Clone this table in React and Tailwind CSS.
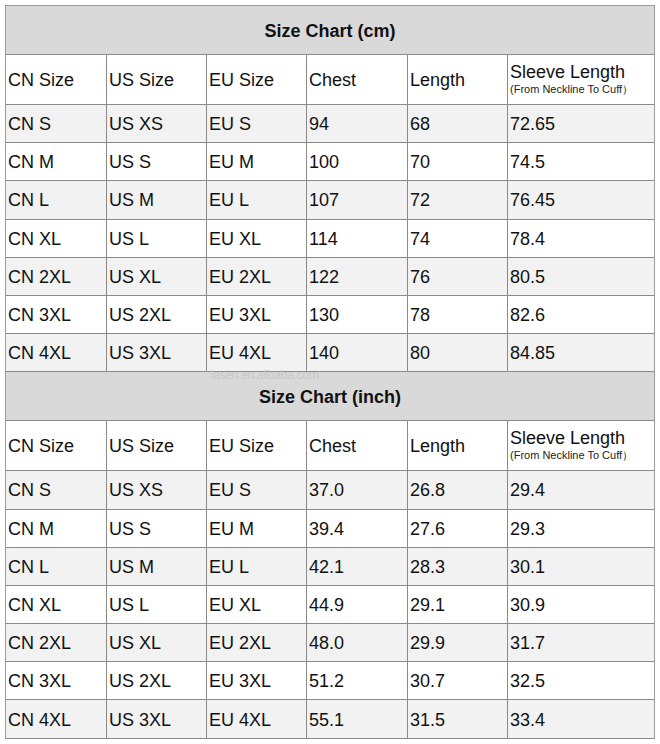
import React from "react";

const cm = [
  ["CN S", "US XS", "EU S", "94", "68", "72.65"],
  ["CN M", "US S", "EU M", "100", "70", "74.5"],
  ["CN L", "US M", "EU L", "107", "72", "76.45"],
  ["CN XL", "US L", "EU XL", "114", "74", "78.4"],
  ["CN 2XL", "US XL", "EU 2XL", "122", "76", "80.5"],
  ["CN 3XL", "US 2XL", "EU 3XL", "130", "78", "82.6"],
  ["CN 4XL", "US 3XL", "EU 4XL", "140", "80", "84.85"],
];

const inch = [
  ["CN S", "US XS", "EU S", "37.0", "26.8", "29.4"],
  ["CN M", "US S", "EU M", "39.4", "27.6", "29.3"],
  ["CN L", "US M", "EU L", "42.1", "28.3", "30.1"],
  ["CN XL", "US L", "EU XL", "44.9", "29.1", "30.9"],
  ["CN 2XL", "US XL", "EU 2XL", "48.0", "29.9", "31.7"],
  ["CN 3XL", "US 2XL", "EU 3XL", "51.2", "30.7", "32.5"],
  ["CN 4XL", "US 3XL", "EU 4XL", "55.1", "31.5", "33.4"],
];

const cols = "grid grid-cols-[100px_100px_100px_101px_100px_148px]";

function Cell({ children, first }) {
  return (
    <div
      className={
        "flex items-center pl-[2px] pt-[2px] " +
        (first ? "" : "border-l border-[#8a8a8a]")
      }
    >
      {children}
    </div>
  );
}

function Chart({ title, rows }) {
  return (
    <div>
      <div className="h-[49px] flex items-center justify-center pt-[2px] bg-[#d9d9d9] border-b border-[#8a8a8a] font-bold text-[18px]">
        {title}
      </div>
      <div className={cols + " h-[50px] bg-white border-b border-[#8a8a8a]"}>
        <Cell first>CN Size</Cell>
        <Cell>US Size</Cell>
        <Cell>EU Size</Cell>
        <Cell>Chest</Cell>
        <Cell>Length</Cell>
        <div className="border-l border-[#8a8a8a] pl-[2px] flex flex-col justify-center">
          <span className="leading-[20px]">Sleeve Length</span>
          <span className="text-[11px] leading-[15px] text-[#222]">
            (From Neckline To Cuff）
          </span>
        </div>
      </div>
      {rows.map((r, i) => (
        <div
          key={r[0]}
          className={
            cols +
            " h-[38.2px] border-b border-[#8a8a8a] " +
            (i % 2 === 0 ? "bg-[#f2f2f2]" : "bg-white")
          }
        >
          {r.map((v, j) => (
            <Cell key={j} first={j === 0}>
              {v}
            </Cell>
          ))}
        </div>
      ))}
    </div>
  );
}

export default function App() {
  return (
    <div className="w-[660px] h-[744px] bg-white pt-[5px] pl-[5px] font-['Liberation_Sans',Arial,sans-serif] text-[18px] text-[#111]">
      <div className="relative w-[650px] border-t border-l border-r border-[#9a9a9a]">
        <Chart title="Size Chart (cm)" rows={cm} />
        <Chart title="Size Chart (inch)" rows={inch} />
        <div className="absolute left-[205px] top-[360px] text-[12px] text-[#c8c8c8] tracking-tight">
          lasen.en.alibaba.com
        </div>
      </div>
    </div>
  );
}
